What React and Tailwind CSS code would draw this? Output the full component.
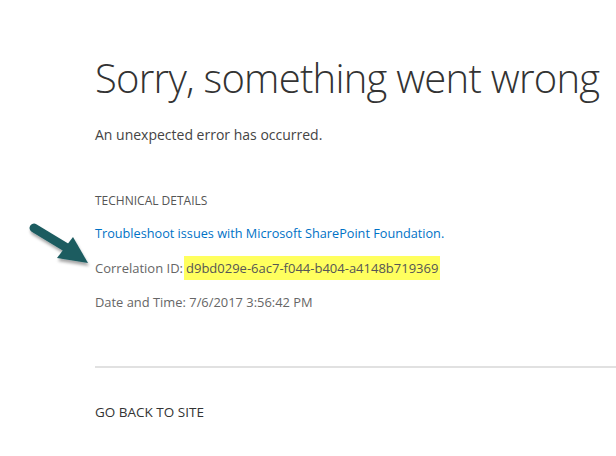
export default function App() {
  return (
    <div className="relative w-[616px] h-[456px] overflow-hidden bg-white font-['Open_Sans',sans-serif] text-[#444]">
      {/* arrow pointing at the correlation id */}
      <svg className="absolute left-[24px] top-[218px]" width="80" height="56" viewBox="0 0 80 56">
        <defs>
          <filter id="sh" x="-20%" y="-20%" width="140%" height="140%">
            <feDropShadow dx="1" dy="3" stdDeviation="1.5" floodColor="#000" floodOpacity="0.35" />
          </filter>
        </defs>
        <g filter="url(#sh)">
          <line x1="10" y1="10" x2="48" y2="33" stroke="#1b5b60" strokeWidth="9" strokeLinecap="round" />
          <polygon points="49,19 64,45 33,40" fill="#1b5b60" />
        </g>
      </svg>

      <div className="pl-[95px] pt-[52px]">
        <h1 className="text-[40px] leading-[52px] font-light text-[#333] whitespace-nowrap tracking-[-0.75px]">
          Sorry, something went wrong
        </h1>
        <p className="mt-[21px] text-[14px] leading-[20px] text-[#444]">An unexpected error has occurred.</p>

        <div className="mt-[48px] text-[12px] leading-[16px] text-[#555]">TECHNICAL DETAILS</div>
        <a className="block mt-[15px] text-[12.7px] leading-[18px] text-[#0072c6]">
          Troubleshoot issues with Microsoft SharePoint Foundation.
        </a>
        <div className="mt-[14px] flex items-center text-[13px] leading-[18px] text-[#666]">
          <span>Correlation ID:</span>
          <span className="ml-[1px] bg-[#ffff5e] px-[2px] py-[3px] text-[#555]">d9bd029e-6ac7-f044-b404-a4148b719369</span>
        </div>
        <div className="mt-[13px] text-[12.9px] leading-[18px] text-[#666]">Date and Time: 7/6/2017 3:56:42 PM</div>

        <div className="mt-[55px] border-t-2 border-[#e1e1e1]" />
        <div className="mt-[34px] text-[13.5px] leading-[20px] text-[#333]">GO BACK TO SITE</div>
      </div>
    </div>
  );
}
